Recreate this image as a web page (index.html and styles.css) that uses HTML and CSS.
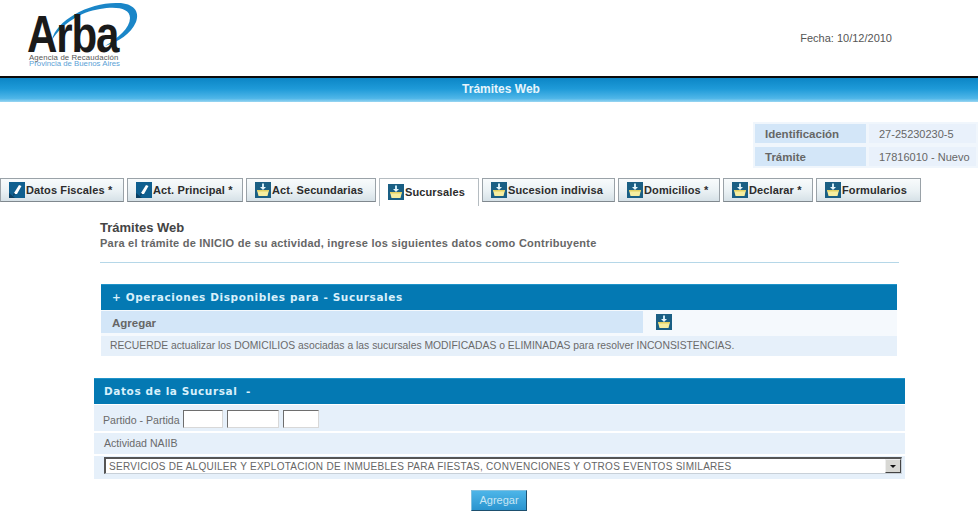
FILE: index.html
```html
<!DOCTYPE html>
<html lang="es">
<head>
<meta charset="utf-8">
<title>Trámites Web</title>
<link rel="stylesheet" href="styles.css">
</head>
<body>
<svg class="defs" width="0" height="0" aria-hidden="true">
  <symbol id="i-edit" viewBox="0 0 16 16">
    <rect width="16" height="16" fill="#0f5f8f"/>
    <path d="M0 16 L0 11 L6 16Z" fill="#0a3f63"/>
    <path d="M6 12 L5 11 L10 3 L12.5 4 L8 12Z" fill="#fff"/>
    <path d="M4 14 L6 12 L5 11Z" fill="#0a2f4a"/>
  </symbol>
  <symbol id="i-add" viewBox="0 0 16 16">
    <rect width="16" height="16" fill="#1a5f84"/>
    <path d="M8 1.5 V6" stroke="#cdeaf6" stroke-width="2"/>
    <path d="M5 5 H11 L8 8Z" fill="#e8f7fc"/>
    <path d="M2 8 H14 L12.5 14 H3.5Z" fill="#f6eea0"/>
    <path d="M2 8 H14 L13.7 9.5 H2.3Z" fill="#e4d264"/>
  </symbol>
</svg>

<header class="top">
  <div class="logo">
    <svg class="logo-ring" viewBox="50 0 90 50" aria-hidden="true">
      <path d="M52 40 C56 20 90 2 118 3 C134 3 140 12 136 22 C131 34 118 42 105 46 C118 38 130 28 130 18 C130 8 116 6 100 9 C80 12 62 24 52 40Z" fill="#1a86c8"/>
    </svg>
    <span class="logo-word">Arba</span>
    <span class="logo-sub">Agencia de Recaudación</span>
    <span class="logo-prov">Provincia de Buenos Aires</span>
  </div>
  <div class="fecha">Fecha: 10/12/2010</div>
</header>
<div class="title-bar">Trámites Web</div>

<div class="info-wrap">
  <table class="info">
    <tr><th>Identificación</th><td>27-25230230-5</td></tr>
    <tr><th>Trámite</th><td>17816010 - Nuevo</td></tr>
  </table>
</div>

<nav class="tabs">
  <a class="tab w1"><svg class="ico"><use href="#i-edit"/></svg>Datos Fiscales *</a>
  <a class="tab w2"><svg class="ico"><use href="#i-edit"/></svg>Act. Principal *</a>
  <a class="tab w3"><svg class="ico"><use href="#i-add"/></svg>Act. Secundarias</a>
  <a class="tab w4 active"><svg class="ico"><use href="#i-add"/></svg>Sucursales</a>
  <a class="tab w5"><svg class="ico"><use href="#i-add"/></svg>Sucesion indivisa</a>
  <a class="tab w6"><svg class="ico"><use href="#i-add"/></svg>Domicilios *</a>
  <a class="tab w7"><svg class="ico"><use href="#i-add"/></svg>Declarar *</a>
  <a class="tab w8"><svg class="ico"><use href="#i-add"/></svg>Formularios</a>
</nav>

<section class="intro">
  <h1>Trámites Web</h1>
  <p>Para el trámite de INICIO de su actividad, ingrese los siguientes datos como Contribuyente</p>
</section>

<section class="ops">
  <h2 class="panel-head">+ Operaciones Disponibles para - Sucursales</h2>
  <div class="op-row">
    <div class="op-label">Agregar</div>
    <div class="op-action"><svg class="ico"><use href="#i-add"/></svg></div>
  </div>
  <div class="op-note">RECUERDE actualizar los DOMICILIOS asociadas a las sucursales MODIFICADAS o ELIMINADAS para resolver INCONSISTENCIAS.</div>
</section>

<section class="datos">
  <h2 class="panel-head">Datos de la Sucursal &nbsp;-</h2>
  <div class="row row-partido">
    <label>Partido - Partida</label>
    <input class="inp i1" type="text"><input class="inp i2" type="text"><input class="inp i3" type="text">
  </div>
  <div class="row row-act">Actividad NAIIB</div>
  <div class="row row-sel">
    <div class="sel">
      <span class="sel-text">SERVICIOS DE ALQUILER Y EXPLOTACION DE INMUEBLES PARA FIESTAS, CONVENCIONES Y OTROS EVENTOS SIMILARES</span>
      <span class="sel-btn"><span class="sel-arrow"></span></span>
    </div>
  </div>
</section>

<div class="actions"><button class="btn" type="button">Agregar</button></div>
</body>
</html>
```
FILE: styles.css
```css
* { box-sizing: border-box; }
html, body { margin: 0; padding: 0; }
body {
  width: 978px;
  height: 520px;
  overflow: hidden;
  background: #fff;
  font-family: "Liberation Sans", Arial, sans-serif;
  font-size: 11px;
  color: #666;
}
.defs { position: absolute; }

.top {
  height: 78px;
  border-bottom: 2px solid #0b0b0b;
  display: flex;
  justify-content: space-between;
  align-items: flex-start;
}
.logo {
  position: relative;
  width: 140px;
  height: 76px;
}
.logo-ring {
  position: absolute;
  left: 50px;
  top: 0;
  width: 90px;
  height: 50px;
}
.logo-word {
  position: absolute;
  left: 27px;
  top: 14px;
  font-size: 52px;
  line-height: 40px;
  font-weight: 700;
  letter-spacing: -1.5px;
  color: #1a1a1a;
  transform: scaleX(.81);
  transform-origin: left top;
}
.logo-sub, .logo-prov {
  position: absolute;
  left: 29px;
  font-size: 7.8px;
  line-height: 6px;
  white-space: nowrap;
}
.logo-sub { top: 55px; color: #555; letter-spacing: .13px; }
.logo-prov { top: 61px; color: #5b9fd6; }
.fecha {
  margin: 32px 86px 0 0;
  font-size: 11px;
  line-height: 13px;
  color: #555;
}

.title-bar {
  height: 24px;
  background: linear-gradient(#0c86c6 0%, #1e9ad8 45%, #4fb6e8 85%, #9ad6f2 100%);
  color: #e6f5fc;
  font-weight: 700;
  font-size: 12px;
  line-height: 22px;
  text-align: center;
  padding-left: 24px;
}

.info-wrap {
  display: flex;
  justify-content: flex-end;
  padding-top: 20px;
}
.info {
  width: 225px;
  height: 46px;
  border-collapse: separate;
  border-spacing: 0;
  background: #e9f1fb;
  font-size: 11px;
}
.info th {
  width: 114px;
  padding: 0 0 0 10px;
  text-align: left;
  font-weight: 700;
  font-size: 11.5px;
  color: #666;
  background: #d3e6f8;
  border: 2px solid #f0f6fc;
  border-right-width: 1px;
}
.info td {
  padding: 0 0 0 10px;
  color: #666;
  border: 2px solid #f0f6fc;
}

.tabs {
  display: flex;
  gap: 3px;
  padding-top: 10px;
  height: 45px;
  align-items: flex-start;
}
.tab {
  display: flex;
  align-items: center;
  height: 24px;
  padding-left: 8px;
  border: 1px solid #9aa2a8;
  border-bottom-color: #80888e;
  background: linear-gradient(#f8fbfc 0%, #eaf1f4 55%, #d6e1e7 100%);
  color: #2c2c2c;
  font-weight: 700;
  font-size: 11px;
  white-space: nowrap;
  letter-spacing: .12px;
}
.tab .ico { margin-right: 1px; }
.tab.active {
  height: 28px;
  background: #fff;
  border-color: #b5bcc1;
  border-bottom: none;
  padding-bottom: 1px;
}
.ico { width: 16px; height: 16px; flex: none; display: block; }
.w1 { width: 124px; }
.w2 { width: 116px; }
.w3 { width: 130px; }
.w4 { width: 100px; }
.w5 { width: 133px; }
.w6 { width: 102px; }
.w7 { width: 90px; }
.w8 { width: 105px; }

.intro {
  margin: 7px 79px 0 100px;
  height: 42px;
  border-bottom: 1px solid #b5d7e8;
  box-sizing: content-box;
  padding-bottom: 0;
}
.intro h1 {
  margin: 0;
  font-size: 13px;
  line-height: 16px;
  font-weight: 700;
  color: #444;
}
.intro p {
  margin: 0;
  font-size: 11px;
  line-height: 14px;
  font-weight: 700;
  letter-spacing: .24px;
  color: #666;
}

.panel-head {
  margin: 0;
  height: 26px;
  background: #0479b3;
  border-top: 1px solid #1f93c9;
  color: #d8f0fb;
  font-family: "DejaVu Sans", Verdana, sans-serif;
  font-size: 10.5px;
  line-height: 24px;
  font-weight: 700;
  letter-spacing: .6px;
  white-space: nowrap;
}

.ops {
  margin: 21px 81px 0 101px;
  background: #f5f9fd;
}
.ops .panel-head { padding-left: 11px; }
.op-row {
  display: flex;
  height: 22px;
  margin-top: 1px;
}
.op-label {
  width: 542px;
  background: #d3e6f8;
  padding-left: 11px;
  font-weight: 700;
  font-size: 11.5px;
  line-height: 24px;
  color: #666;
}
.op-action { padding: 3px 0 0 13px; }
.op-note {
  margin-top: 3px;
  height: 20px;
  background: #e6f0fa;
  padding-left: 9px;
  line-height: 20px;
  font-size: 10.35px;
  color: #6a6a6a;
  white-space: nowrap;
}

.datos {
  margin: 22px 73px 0 94px;
}
.datos .panel-head { padding-left: 10px; }
.row {
  background: #e6f0fa;
  margin-top: 1px;
  padding-left: 9px;
  font-size: 10.6px;
  color: #6a6a6a;
}
.row-partido {
  height: 26px;
  display: flex;
  align-items: center;
  padding-top: 2px;
}
.row-partido label { margin-right: 3px; padding-top: 2px; }
.inp {
  height: 18px;
  margin: 0 4px 0 0;
  padding: 0;
  background: #fff;
  border-width: 1px;
  border-style: solid;
  border-color: #6e6e6e #d8d8d8 #d8d8d8 #6e6e6e;
  border-radius: 0;
}
.i1 { width: 40px; }
.i2 { width: 52px; }
.i3 { width: 36px; }
.row-act {
  height: 21px;
  margin-top: 2px;
  padding-left: 10px;
  line-height: 20px;
}
.row-sel {
  height: 23px;
  margin-top: 2px;
  padding: 1px 3px 0 10px;
}
.sel {
  height: 17px;
  display: flex;
  align-items: center;
  justify-content: space-between;
  background: #fff;
  border-width: 2px 1px 1px 2px;
  border-style: solid;
  border-color: #555 #c8d0d8 #c8d0d8 #555;
  padding-left: 3px;
}
.sel-text {
  font-size: 10px;
  letter-spacing: .27px;
  color: #666;
  white-space: nowrap;
}
.sel-btn {
  width: 16px;
  height: 14px;
  display: flex;
  align-items: center;
  justify-content: center;
  background: #d8d8d4;
  border: 1px solid;
  border-color: #eee #444 #444 #eee;
}
.sel-arrow {
  width: 0;
  height: 0;
  border-left: 3px solid transparent;
  border-right: 3px solid transparent;
  border-top: 3px solid #111;
}

.actions {
  display: flex;
  justify-content: center;
  padding: 11px 0 0 20px;
}
.btn {
  width: 56px;
  height: 21px;
  padding: 0 0 2px;
  border: 1px solid;
  border-color: #7fc0e0 #1d4f6e #1d4f6e #7fc0e0;
  background: linear-gradient(#4db5e8, #2a94cf);
  color: #c9e6f4;
  font-family: "Liberation Sans", Arial, sans-serif;
  font-size: 11px;
}
```
